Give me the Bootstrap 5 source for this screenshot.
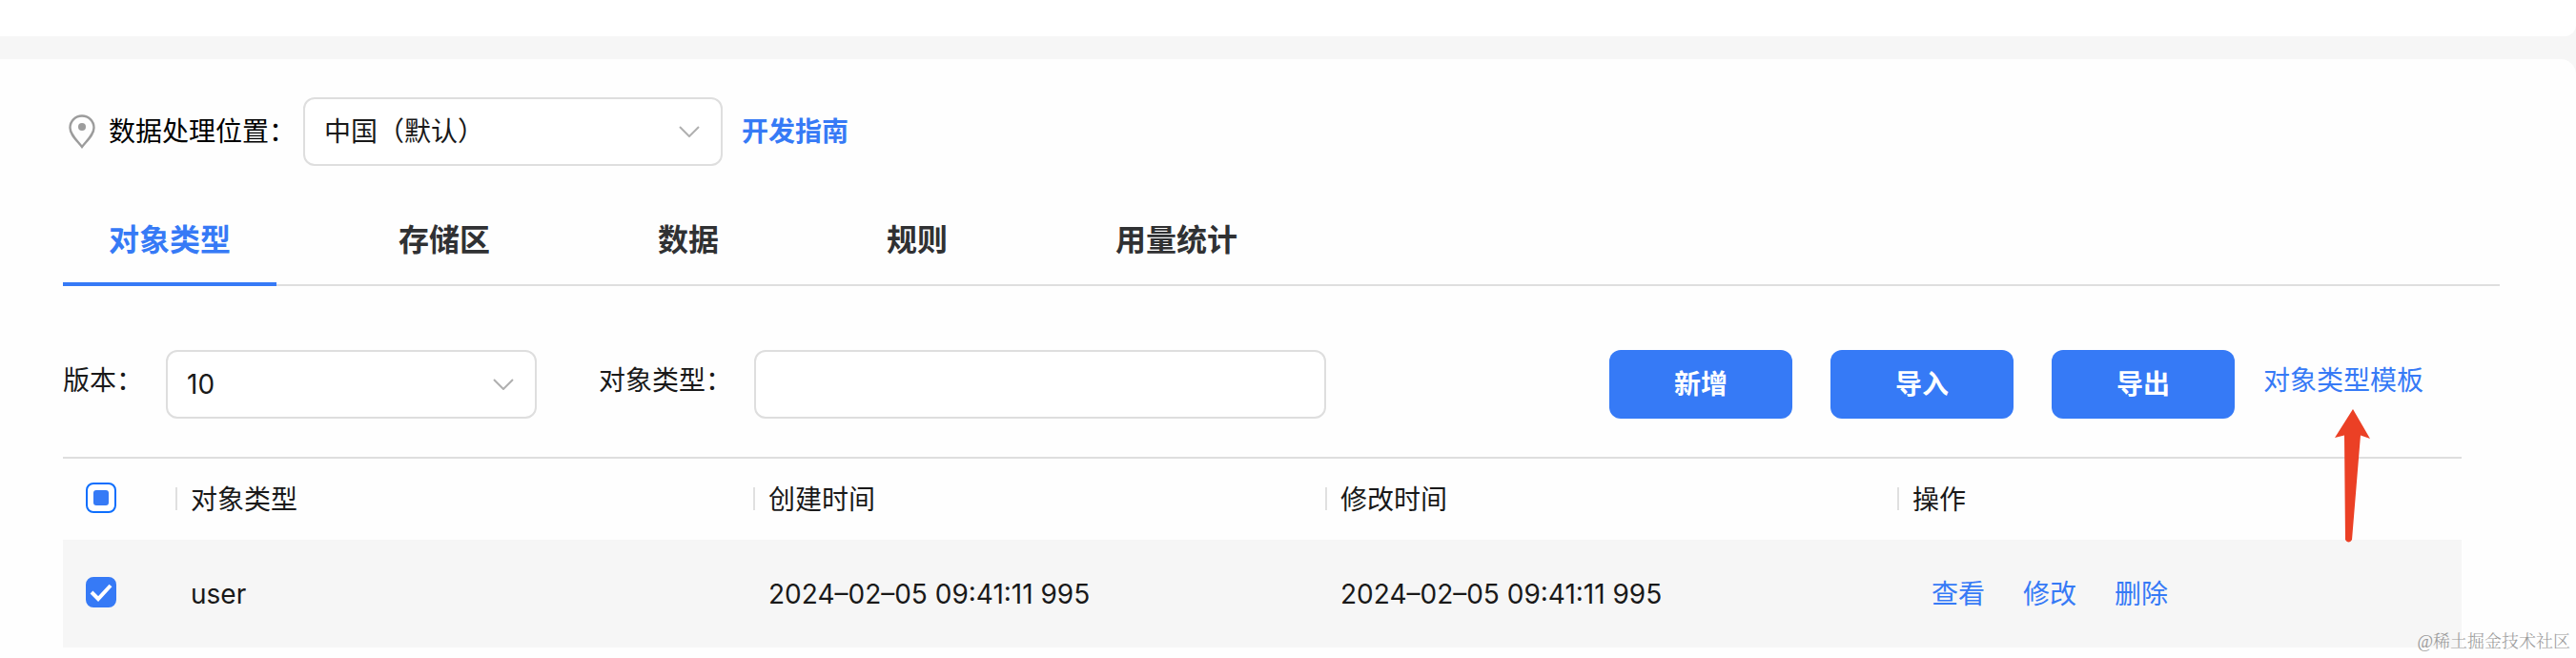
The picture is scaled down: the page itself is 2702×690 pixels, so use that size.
<!DOCTYPE html>
<html lang="zh-CN">
<head>
<meta charset="utf-8">
<meta name="viewport" content="width=device-width, initial-scale=1">
<title>对象类型</title>
<link rel="stylesheet" href="https://cdn.jsdelivr.net/npm/bootstrap@5.3.0/dist/css/bootstrap.min.css">
<style>
  :root { --brand: #367af6; --line: #dedede; --soft: #f6f6f6; }
  body { font-family: Inter, "Noto Sans CJK SC", sans-serif; font-size: 28px; line-height: 40px; color: #191919; background: var(--soft); }
  a { color: var(--brand); text-decoration: none; }
  .top-strip { height: 38px; background: #fff; border-bottom-right-radius: 12px; margin-bottom: 24px; }
  .panel { background: #fefefe; border-top-right-radius: 16px; padding: 40px 80px 0 66px; min-height: calc(100vh - 62px); }
  .pin { width: 28px; height: 36px; margin: 0 14px 0 6px; }
  .field { height: 72px; border: 2px solid var(--line); border-radius: 12px; font-size: 28px; padding: 0 20px; color: #191919; background-color: #fff; }
  .form-select.field { background-image: url("data:image/svg+xml,%3Csvg xmlns='http://www.w3.org/2000/svg' viewBox='0 0 22 12'%3E%3Cpath d='M1 1l10 10L21 1' fill='none' stroke='%23b0b0b0' stroke-width='2'/%3E%3C/svg%3E"); background-size: 22px 12px; background-position: right 22px center; }
  .w-place { width: 440px; }
  .w-version { width: 389px; }
  .w-type { width: 600px; }
  .label-place { width: 204px; color: #000; }
  .label-version { width: 108px; }
  .label-type { width: 163px; margin-left: 65px; }
  .guide { margin-left: 20px; font-weight: 600; }
  .tabs-row { margin-top: 28px; gap: 80px; border-bottom: 2px solid var(--line); }
  .tabs-row .nav-link { font-size: 32px; font-weight: 600; line-height: 44px; color: #303133; padding: 28px 48px 22px; border-radius: 0; border-bottom: 4px solid transparent; margin-bottom: -2px; }
  .tabs-row .nav-link.active { color: var(--brand); border-color: var(--brand); }
  .filters { margin: 67px 40px 0 0; }
  .filters label, .template-link { margin-bottom: 8px; }
  .action-set, .btn-set { gap: 40px; }
  .btn-brand { width: 192px; height: 72px; border-radius: 12px; background: var(--brand); color: #fff; font-size: 28px; font-weight: 600; padding: 0; }
  .template-link { position: relative; margin-left: 30px; margin-right: 40px; }
  .pointer { position: absolute; left: 74px; top: 49px; width: 40px; height: 142px; z-index: 2; pointer-events: none; }
  .list-wrap { margin: 40px 40px 0 0; }
  .data-list { width: 100%; table-layout: fixed; border-top: 2px solid var(--line); }
  .data-list th { position: relative; height: 86px; padding: 0 16px; font-weight: 400; }
  .data-list th + th::before { content: ""; position: absolute; left: 0; top: 30px; width: 2px; height: 24px; background: #e0e0e0; }
  .data-list td { height: 113px; padding: 0 16px; background: var(--soft); }
  .data-list th:first-child, .data-list td:first-child { padding: 0 24px 3px; }
  .data-list .actions { padding-left: 36px; }
  .c-tick { width: 118px; }
  .c-name { width: 606px; }
  .c-time { width: 600px; }
  .form-check-input.tick { display: block; width: 32px; height: 32px; margin: 0; border: 2px solid var(--brand); border-radius: 8px; background-size: 100% 100%; }
  .form-check-input.tick:checked { background-color: var(--brand); background-image: url("data:image/svg+xml,%3Csvg xmlns='http://www.w3.org/2000/svg' viewBox='0 0 28 28'%3E%3Cpath d='M4 14l7 7L24 7' fill='none' stroke='%23fff' stroke-width='4'/%3E%3C/svg%3E"); }
  .form-check-input.tick:indeterminate { background-color: #fff; background-image: url("data:image/svg+xml,%3Csvg xmlns='http://www.w3.org/2000/svg' viewBox='0 0 28 28'%3E%3Crect x='6' y='6' width='16' height='16' rx='3' fill='%23367af6'/%3E%3C/svg%3E"); }
  .credit { position: absolute; right: 6px; bottom: 3px; font-family: "Liberation Serif", "Noto Serif CJK SC", "Noto Sans CJK SC", serif; font-weight: 300; font-size: 18px; line-height: 28px; color: #9a9a9a; }
</style>
</head>
<body>
<div class="top-strip"></div>
<main class="panel">
  <div class="d-flex align-items-center">
    <svg class="pin" viewBox="0 0 28 36" aria-hidden="true"><path d="M14 1.500C7 1.500 1.500 7 1.500 14c0 7 7 13 12.500 20C19.500 27 26.500 21 26.500 14c0-7-5.500-12.500-12.500-12.500z" fill="none" stroke="#9c9c9c" stroke-width="2.400"/><circle cx="14" cy="13" r="4" fill="#9c9c9c"/></svg>
    <label class="label-place" for="place">数据处理位置：</label>
    <select class="form-select field w-place" id="place"><option>中国（默认）</option></select>
    <a class="guide" href="#">开发指南</a>
  </div>
  <nav class="nav tabs-row">
    <a class="nav-link active" href="#">对象类型</a>
    <a class="nav-link" href="#">存储区</a>
    <a class="nav-link" href="#">数据</a>
    <a class="nav-link" href="#">规则</a>
    <a class="nav-link" href="#">用量统计</a>
  </nav>
  <div class="filters d-flex align-items-center">
    <label class="label-version" for="version">版本：</label>
    <select class="form-select field w-version" id="version"><option>10</option></select>
    <label class="label-type" for="type">对象类型：</label>
    <input class="form-control field w-type" id="type" type="text">
    <div class="d-flex align-items-center ms-auto">
      <div class="d-flex btn-set">
        <button class="btn btn-brand" type="button">新增</button>
        <button class="btn btn-brand" type="button">导入</button>
        <button class="btn btn-brand" type="button">导出</button>
      </div>
      <a class="template-link" href="#">对象类型模板<svg class="pointer" viewBox="0 0 40 142" aria-hidden="true"><path d="M20 1L38 32L28 28.500L19 138Q15.500 143 12 138L11 28.500L1 31z" fill="#eb4025"/></svg></a>
    </div>
  </div>
  <div class="list-wrap">
    <table class="data-list">
      <colgroup><col class="c-tick"><col class="c-name"><col class="c-time"><col class="c-time"><col></colgroup>
      <thead><tr>
        <th><input class="form-check-input tick" id="all" type="checkbox" aria-label="全选"></th>
        <th>对象类型</th><th>创建时间</th><th>修改时间</th><th>操作</th>
      </tr></thead>
      <tbody><tr>
        <td><input class="form-check-input tick" type="checkbox" aria-label="user" checked></td>
        <td>user</td><td>2024–02–05 09:41:11 995</td><td>2024–02–05 09:41:11 995</td>
        <td class="actions"><div class="d-flex action-set"><a href="#">查看</a><a href="#">修改</a><a href="#">删除</a></div></td>
      </tr></tbody>
    </table>
  </div>
</main>
<div class="credit">@稀土掘金技术社区</div>
<script src="https://cdn.jsdelivr.net/npm/bootstrap@5.3.0/dist/js/bootstrap.bundle.min.js"></script>
<script>document.getElementById('all').indeterminate = true;</script>
</body>
</html>
